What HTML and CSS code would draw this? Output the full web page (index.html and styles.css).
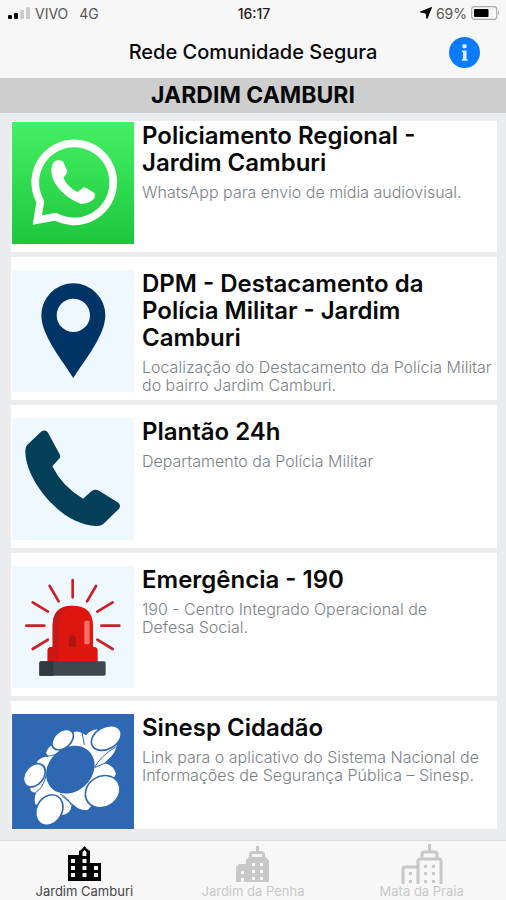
FILE: index.html
```html
<!DOCTYPE html>
<html lang="pt-BR">
<head>
<meta charset="utf-8">
<meta name="viewport" content="width=device-width, initial-scale=1">
<title>Rede Comunidade Segura</title>
<link rel="stylesheet" href="styles.css">
</head>
<body>
<div class="status">
  <div class="status-side">
    <svg class="signal" viewBox="0 0 22 14" aria-hidden="true"><rect x="0" y="9" width="4" height="4" rx="1"/><rect x="6" y="7" width="4" height="6" rx="1"/><g fill="#ccc"><rect x="12" y="4" width="4" height="9" rx="1"/><rect x="18" y="1" width="4" height="12" rx="1"/></g></svg>
    <span>VIVO</span><span class="network">4G</span>
  </div>
  <span class="time">16:17</span>
  <div class="status-side status-end">
    <svg class="arrow" viewBox="0 0 12 12" aria-hidden="true"><path d="M11.500 .5 7 11.500 6 6 .5 5Z" stroke="#000"/></svg>
    <span>69%</span>
    <svg class="battery" viewBox="0 0 29 14" aria-hidden="true"><rect x=".7" y=".7" width="25" height="12.600" rx="2.500" fill="none" stroke="#aaa" stroke-width="1.200"/><rect x="3" y="3" width="14.500" height="8" rx="1"/><path d="M27 4.500q2 2.500 0 5z" fill="#aaa"/></svg>
  </div>
</div>
<header class="nav">
  <h1 class="nav-title">Rede Comunidade Segura</h1>
  <button class="info" type="button" aria-label="Informações">
    <svg viewBox="0 0 30 30" aria-hidden="true"><circle cx="15" cy="15" r="15" fill="#0a7aff"/><g fill="#dcecff"><rect x="13" y="7" width="4" height="4" rx="1"/><path d="M12.500 13H17V21.500h1V23h-5.500v-1.500H13.500v-7h-1z"/></g></svg>
  </button>
</header>
<h2 class="section">JARDIM CAMBURI</h2>
<main class="list">
  <a class="card card-first" href="#whatsapp">
    <svg class="thumb" viewBox="36 37 366 366" aria-hidden="true">
      <defs><linearGradient id="green" x2="0" y2="1"><stop stop-color="#46f063"/><stop offset="1" stop-color="#1cc73d"/></linearGradient></defs>
      <rect x="36" y="37" width="366" height="366" fill="url(#green)"/>
      <path d="M112 331 121 276A117 117 0 1 1 167 321Z" fill="none" stroke="#fff" stroke-width="23"/>
      <path d="M164 155Q177 148 189 155L202 184Q201 195 190 204Q202 231 232 247Q240 243 250 233L263 237 283 250Q288 259 280 269Q265 284 241 282Q194 264 166 222Q154 203 154 180Q155 164 164 155Z" fill="#fff"/>
    </svg>
    <div class="text"><h3>Policiamento Regional - Jardim Camburi</h3><p>WhatsApp para envio de mídia audiovisual.</p></div>
  </a>
  <a class="card" href="#dpm">
    <svg class="thumb" viewBox="36 45 366 366" aria-hidden="true">
      <rect x="36" y="45" width="366" height="366" fill="#eff8ff"/>
      <path fill-rule="evenodd" d="M220 369C188 318 124 242 124 181A96 96 0 0 1 316 181C316 242 252 318 220 369ZM220 131a50 50 0 1 0 0 100a50 50 0 0 0 0-100Z" fill="#003466"/>
    </svg>
    <div class="text"><h3>DPM - Destacamento da Polícia Militar - Jardim Camburi</h3><p>Localização do Destacamento da Polícia Militar do bairro Jardim Camburi.</p></div>
  </a>
  <a class="card" href="#plantao">
    <svg class="thumb" viewBox="36 56 366 366" aria-hidden="true">
      <rect x="36" y="56" width="366" height="366" fill="#eff8ff"/>
      <path d="M82 136 125 96Q137 89 144 100L179 165Q183 174 176 180L157 201Q187 262 249 298L275 275Q286 268 297 274L355 310Q364 319 357 328L310 374Q302 381 288 380C243 378 193 352 157 314C112 270 77 208 76 158Q75 143 82 136Z" fill="#033f59"/>
    </svg>
    <div class="text"><h3>Plantão 24h</h3><p>Departamento da Polícia Militar</p></div>
  </a>
  <a class="card" href="#emergencia">
    <svg class="thumb" viewBox="36 48 366 366" aria-hidden="true">
      <rect x="36" y="48" width="366" height="366" fill="#eff8ff"/>
      <path d="M218 90v52M149 108l27 46M288 108l-27 46M98 157l46 28M338 157l-46 28M79 227h54M304 227h54M98 297l46-28M338 297l-46-28" fill="none" stroke="#ca2025" stroke-width="8" stroke-linecap="round"/>
      <path d="M158 300V226Q158 167 218 167T279 226V300Z" fill="#df160e"/>
      <path d="M158 300V226Q158 167 218 167Q177 181 177 228V300Z" fill="#c51a17"/>
      <path d="M143 336V302Q143 291 154 291H282Q293 291 293 302V336Z" fill="#df160e"/>
      <path d="M143 336V302Q143 291 154 291H177V336Z" fill="#cb1714"/>
      <path d="M207 291V266Q207 256 217 256T228 266V291Z" fill="#ad1713"/>
      <rect x="253" y="212" width="16" height="71" rx="4" fill="#ff6d67"/>
      <rect x="118" y="334" width="199" height="43" rx="5" fill="#3c474f"/>
      <path d="M123 334H160V377H118V339Q118 334 123 334Z" fill="#303940"/>
    </svg>
    <div class="text"><h3>Emergência - 190</h3><p>190 - Centro Integrado Operacional de Defesa&nbsp;Social.</p></div>
  </a>
  <a class="card card-last" href="#sinesp">
    <svg class="thumb" viewBox="36 57 366 366" aria-hidden="true">
      <rect x="36" y="57" width="366" height="366" fill="#2e68b2"/>
      <path fill="#fff" d="M138 174Q143 158 156 151L220 112Q231 107 244 113L258 121Q270 106 291 103L350 151Q347 176 322 195L314 205Q342 211 348 237L330 270 264 344Q244 349 226 334L214 328Q216 353 188 360L106 328Q101 310 109 292Q88 294 91 272L110 205Q114 188 145 184Z"/>
      <g fill="none" stroke="#2e68b2" stroke-width="3"><path d="M139 184Q167 183 201 160M253 150 246 112M283 218Q301 184 348 155M285 217 321 202M107 292Q130 280 139 239M214 331Q205 308 180 297M187 304 226 335"/></g>
      <g fill="#fff" stroke="#2e68b2" stroke-width="5">
        <ellipse cx="188" cy="134" rx="37" ry="25" transform="rotate(-42 188 134)"/>
        <ellipse cx="319" cy="129" rx="48" ry="33" transform="rotate(-30 319 129)"/>
        <ellipse cx="103" cy="241" rx="39" ry="28" transform="rotate(-51 103 241)"/>
        <ellipse cx="308" cy="290" rx="54" ry="46" transform="rotate(-32 308 290)"/>
        <ellipse cx="148" cy="345" rx="48" ry="38" transform="rotate(-60 148 345)"/>
      </g>
      <ellipse cx="211" cy="224" rx="79" ry="65" transform="rotate(-43 211 224)" fill="#2e68b2"/>
    </svg>
    <div class="text"><h3>Sinesp Cidadão</h3><p>Link para o aplicativo do Sistema Nacional de Informações de Segurança Pública – Sinesp.</p></div>
  </a>
</main>
<nav class="tabs">
  <a class="tab tab-active" href="#camburi" aria-current="page">
    <svg viewBox="0 0 44 42" aria-hidden="true"><path fill="currentColor" fill-rule="evenodd" d="M6 12H17V8L20 6 22.500 3 25 6 28 8V20H39V38H6ZM20.500 9v4h4V9L22.500 7ZM9 16v4h4v-4ZM9 23v4h4v-4ZM9 30v4h4v-4ZM20.500 16v4h4v-4ZM20.500 23v4h4v-4ZM20.500 30v4h4v-4ZM32 23v4h4v-4ZM32 30v4h4v-4Z"/></svg>
    <span>Jardim Camburi</span>
  </a>
  <a class="tab" href="#penha">
    <svg viewBox="0 0 44 42" aria-hidden="true"><path fill="currentColor" fill-rule="evenodd" d="M5 39V24L8 21H15V17L18 14V10L20 8H25V3H28V8H31L34 10V14L38 17V39ZM21 11v3h10v-3ZM10 28v3h3v-3ZM10 35v4h3v-4ZM21 20v3h3v-3ZM29 20v3h3v-3ZM21 27v3h3v-3ZM29 27v3h3v-3ZM21 34v3h3v-3ZM29 34v3h3v-3Z"/></svg>
    <span>Jardim da Penha</span>
  </a>
  <a class="tab" href="#praia">
    <svg viewBox="0 0 44 42" aria-hidden="true"><path fill="none" stroke="currentColor" stroke-width="3" d="M3 41V26Q3 24 5 24H18M18 41V18Q18 16 20 16H39Q41 16 41 18V41M22 16V11Q22 9 24 9H35Q37 9 37 11V16M29.500 9V1"/><path fill="currentColor" d="M9 29h3v3h-3zM9 37h3v3h-3zM24 22h3v3h-3zM32 22h3v3h-3zM24 29h3v3h-3zM32 29h3v3h-3zM24 37h3v3h-3zM32 37h3v3h-3z"/></svg>
    <span>Mata da Praia</span>
  </a>
</nav>
</body>
</html>
```
FILE: styles.css
```css
* { box-sizing: border-box; }
body {
  margin: 0;
  height: 100vh;
  display: flex;
  flex-direction: column;
  background: #ebecee;
  color: #080808;
  font-family: Inter, "Liberation Sans", sans-serif;
}
h1, h2, h3, p { margin: 0; }
a { color: inherit; text-decoration: none; }
svg { display: block; flex: none; }

.status {
  display: flex;
  align-items: center;
  height: 26px;
  padding: 0 6px 0 8px;
  background: #f7f7f7;
  font-size: 14px;
  color: #555;
}
.status-side { flex: 1; display: flex; align-items: center; gap: 5px; }
.status-end { justify-content: flex-end; gap: 4px; }
.network { margin-left: 6px; }
.time { font-weight: 500; color: #222; }
.signal { width: 22px; height: 14px; }
.arrow { width: 12px; height: 12px; }
.battery { width: 29px; height: 14px; }

.nav {
  display: grid;
  grid-template-columns: 1fr auto 1fr;
  align-items: center;
  height: 52px;
  padding: 0 26px;
  background: #f7f7f7;
}
.nav-title { grid-column: 2; font-size: 20px; font-weight: 500; }
.info { justify-self: end; width: 31px; height: 31px; padding: 0; border: 0; background: none; }
.section {
  height: 35px;
  background: #cecece;
  font-size: 23px;
  line-height: 35px;
  font-weight: 700;
  text-align: center;
}

.list {
  flex: 1;
  min-height: 0;
  display: flex;
  flex-direction: column;
  gap: 5px;
  padding: 8px 9px 11px 11px;
}
.card {
  flex: none;
  display: flex;
  align-items: flex-start;
  gap: 8px;
  min-height: 143px;
  padding: 13px 4px 5px 1px;
  background: #fff;
}
.card-first { min-height: 131px; padding-top: 1px; }
.card-last { flex: 1; min-height: 0; padding-bottom: 0; overflow: hidden; }
.thumb { width: 122px; height: 122px; }
.text { flex: 1; min-width: 0; }
.text h3 { font-size: 24px; line-height: 27px; font-weight: 600; }
.text p { margin-top: 7px; font-size: 16px; line-height: 18px; font-weight: 300; color: #7b8187; }

.tabs {
  display: grid;
  grid-template-columns: repeat(3, 1fr);
  height: 60px;
  border-top: 1px solid #dcdcde;
  background: #f7f7f7;
}
.tab {
  display: flex;
  flex-direction: column;
  align-items: center;
  padding-top: 2px;
  font-size: 13px;
  line-height: 13px;
  color: #c8c8c8;
}
.tab svg { width: 44px; height: 42px; }
.tab-active { color: #000; }
.tab-active span { color: #444; }
```
